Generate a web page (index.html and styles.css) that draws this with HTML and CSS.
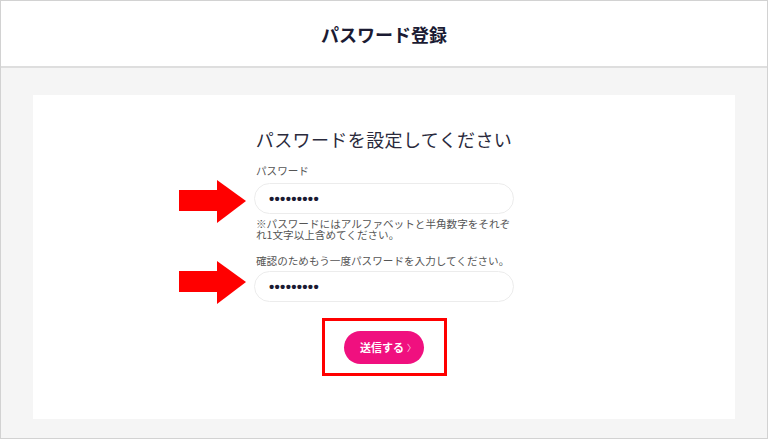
FILE: index.html
```html
<!DOCTYPE html>
<html lang="ja">
<head>
    <meta charset="UTF-8">
    <meta name="viewport" content="width=device-width, initial-scale=1.0">
    <title>パスワード登録</title>

    <!-- estilo -->
    <link rel="stylesheet" href="styles.css">
</head>
<body>
    <div class="frame">
        <!-- cabecera -->
        <header class="header">
            <h1>パスワード登録</h1>
        </header>

        <!-- contenido -->
        <main class="main">
            <div class="card">
                <h2>パスワードを設定してください</h2>

                <form class="form" onsubmit="return false">
                    <label class="label" for="pw1">パスワード</label>
                    <div class="field">
                        <svg class="arrow arrowTop" viewBox="0 0 67 43" width="67" height="43">
                            <rect x="0" y="10" width="39" height="21" fill="#ff0000"/>
                            <polygon points="38,0 67,21 38,43" fill="#ff0000"/>
                        </svg>
                        <input id="pw1" type="password" value="password1">
                    </div>
                    <p class="note">※パスワードにはアルファベットと半角数字をそれぞれ1文字以上含めてください。</p>

                    <label class="label labelConfirm" for="pw2">確認のためもう一度パスワードを入力してください。</label>
                    <div class="field">
                        <svg class="arrow arrowBottom" viewBox="0 0 67 43" width="67" height="43">
                            <rect x="0" y="10" width="39" height="21" fill="#ff0000"/>
                            <polygon points="38,0 67,21 38,43" fill="#ff0000"/>
                        </svg>
                        <input id="pw2" type="password" value="password1">
                    </div>

                    <div class="highlight">
                        <button type="submit" class="sendBtn">送信する<span class="chevron">〉</span></button>
                    </div>
                </form>
            </div>
        </main>
    </div>
</body>
</html>
```

FILE: styles.css
```css
* {
    box-sizing: border-box;
}

body {
    margin: 0;
    font-family: "Noto Sans CJK JP", "Noto Sans", sans-serif;
    color: #2a2a3c;
}

.frame {
    width: 768px;
    height: 439px;
    border: 1px solid #d2d2d2;
    background-color: #f5f5f5;
    overflow: hidden;
}

.header {
    height: 67px;
    background-color: white;
    border-bottom: 2px solid #dedede;
    display: flex;
    justify-content: center;
    align-items: center;
}

.header h1 {
    margin: 0;
    font-size: 18px;
    font-weight: 700;
    color: #1b1b33;
}

.main {
    padding: 27px 32px 0;
}

.card {
    height: 324px;
    background-color: white;
    display: flex;
    flex-direction: column;
    align-items: center;
    padding-top: 31px;
}

.card h2 {
    margin: 0;
    font-size: 18px;
    line-height: 26px;
    font-weight: 400;
    letter-spacing: 0.4px;
    color: #2a2a3c;
}

.form {
    width: 260px;
    display: flex;
    flex-direction: column;
    margin-top: 12px;
}

.label {
    font-size: 10.6px;
    line-height: 14px;
    color: #555;
    padding-left: 2px;
    margin-bottom: 5px;
}

.labelConfirm {
    margin-top: 14px;
    margin-bottom: 3px;
}

.field {
    position: relative;
}

.arrow {
    position: absolute;
    left: -75px;
    display: block;
}

.arrowTop {
    top: -3px;
}

.arrowBottom {
    top: -10px;
}

input {
    width: 100%;
    height: 31px;
    padding: 0 14px;
    border: 1px solid #ececec;
    border-radius: 16px;
    background-color: white;
    font-family: "Liberation Sans", sans-serif;
    font-size: 15px;
    font-weight: 700;
    letter-spacing: 0.3px;
    color: #1b1b33;
    outline: none;
}

.note {
    margin: 4px 0 0;
    padding-left: 2px;
    font-size: 10.6px;
    line-height: 11px;
    color: #555;
}

.highlight {
    align-self: center;
    margin-top: 16px;
    width: 125px;
    height: 58px;
    border: 3px solid #ff0000;
    display: flex;
    justify-content: center;
    align-items: center;
}

.sendBtn {
    width: 80px;
    height: 33px;
    border: none;
    border-radius: 17px;
    background-color: #f0107f;
    color: white;
    font-family: "Noto Sans CJK JP", sans-serif;
    font-size: 11px;
    font-weight: 700;
    cursor: pointer;
    display: flex;
    justify-content: center;
    align-items: center;
    padding: 0 0 0 8px;
}

.chevron {
    font-weight: 300;
    font-size: 9px;
    margin-left: 3px;
}
```
